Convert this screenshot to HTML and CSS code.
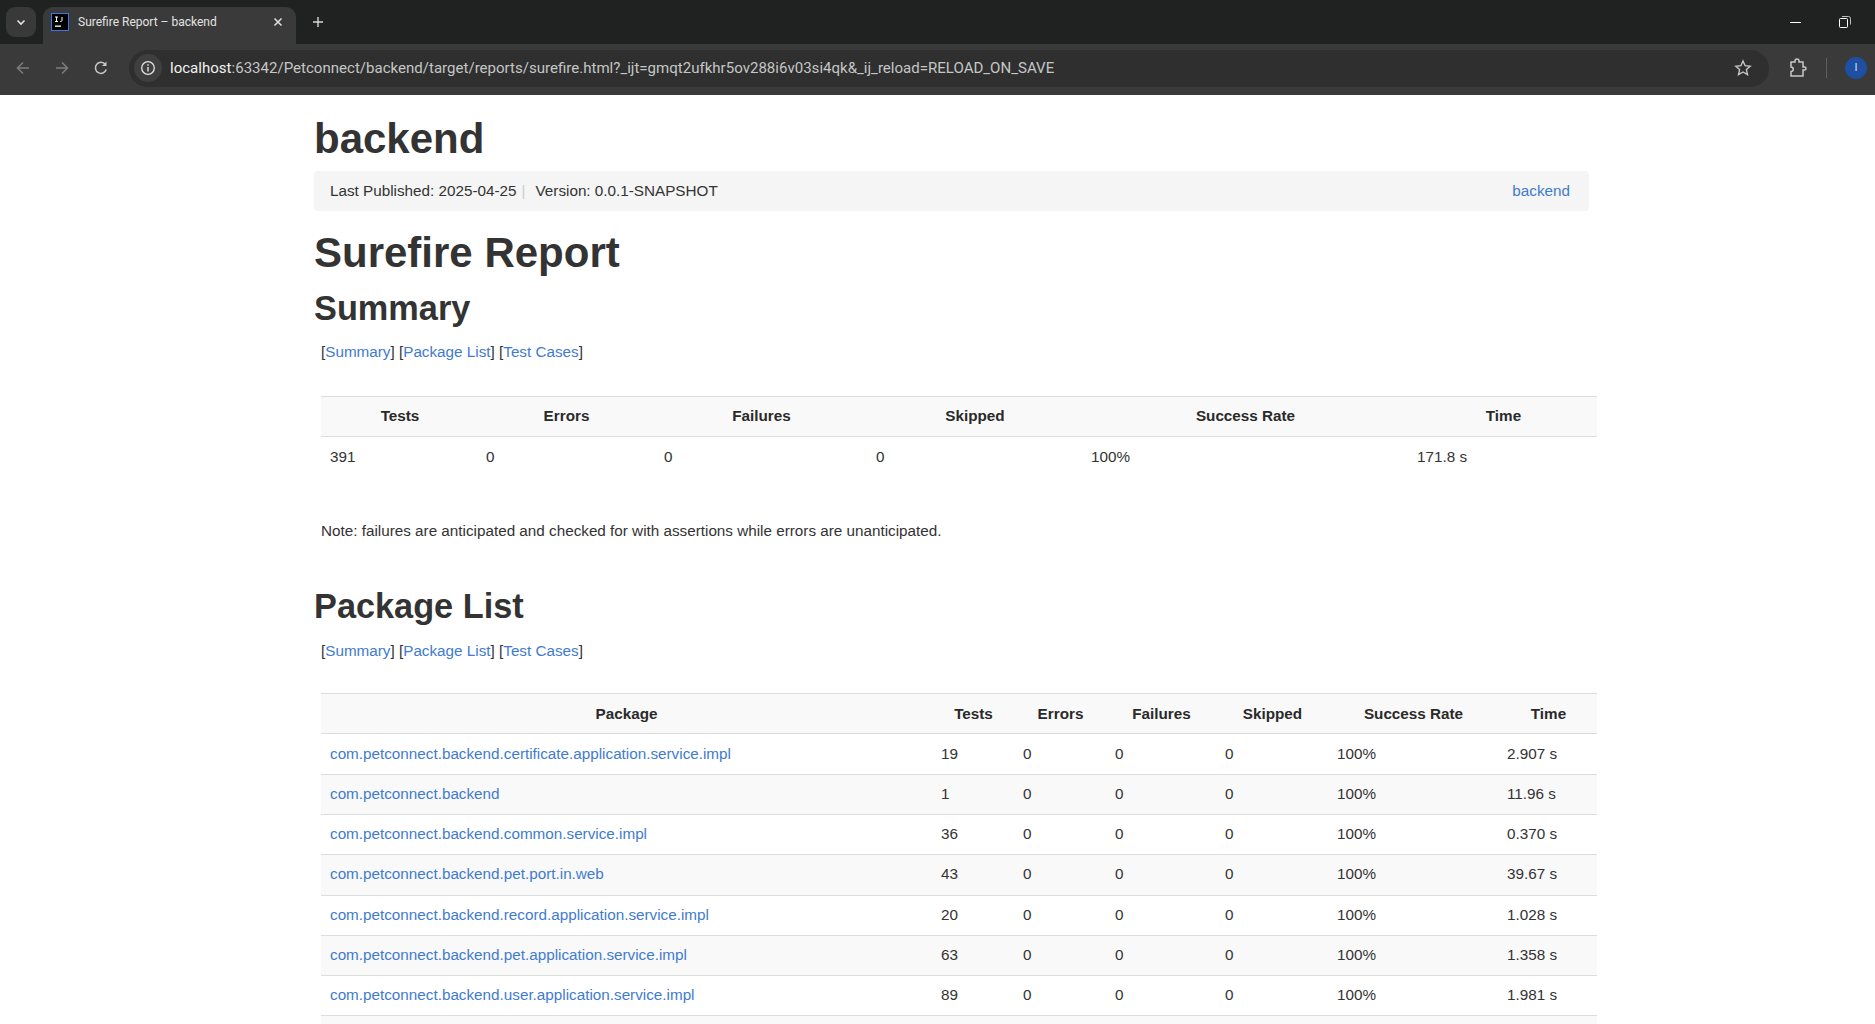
FILE: index.html
```html
<!DOCTYPE html>
<html lang="en">
<head>
    <meta charset="UTF-8">
    <title>Surefire Report – backend</title>
    <link rel="stylesheet" href="styles.css">
</head>
<body>
<div class="chrome">
    <div class="tabstrip">
        <div class="tabsearch">
            <svg width="12" height="12" viewBox="0 0 12 12"><path d="M2.500 4.500 6 8l3.500-3.500" fill="none" stroke="#e3e3e3" stroke-width="1.600"/></svg>
        </div>
        <div class="tab">
            <svg class="favicon" width="18" height="18" viewBox="0 0 18 18"><rect x="0.500" y="0.500" width="17" height="17" fill="#000" stroke="#3b78e7"/><rect x="4" y="12.500" width="6" height="1.300" fill="#fff"/><path d="M4 4h3M5.500 4v4.500M4 8.500h3M11 4v3.500q0 1-1.800 1" fill="none" stroke="#fff"/></svg>
            <span class="tabtitle">Surefire Report – backend</span>
            <svg class="tabclose" width="10" height="10" viewBox="0 0 10 10"><path d="M1.500 1.500l7 7M8.500 1.500l-7 7" stroke="#e3e3e3" stroke-width="1.500"/></svg>
        </div>
        <svg class="newtab" width="12" height="12" viewBox="0 0 12 12"><path d="M6 1v10M1 6h10" stroke="#d8d8d8" stroke-width="1.400"/></svg>
        <div class="winbtns">
            <svg width="11" height="11" viewBox="0 0 11 11"><path d="M0 5.500h11" stroke="#fff"/></svg>
            <svg width="12" height="12" viewBox="0 0 12 12"><rect x="0.500" y="2.500" width="8" height="9" rx="1" fill="none" stroke="#fff"/><path d="M3 0.500h6.500q2 0 2 2v6" fill="none" stroke="#bbb"/></svg>
        </div>
    </div>
    <div class="toolbar">
        <svg class="navicon" width="16" height="16" viewBox="0 0 16 16"><path d="M14 8H2.500M8 2.500 2.500 8 8 13.500" fill="none" stroke="#7d7d7d" stroke-width="1.500"/></svg>
        <svg class="navicon" width="16" height="16" viewBox="0 0 16 16"><path d="M2 8h11.500M8 2.500 13.500 8 8 13.500" fill="none" stroke="#7d7d7d" stroke-width="1.500"/></svg>
        <svg class="navicon" width="16" height="16" viewBox="0 0 16 16"><path d="M13.200 9.500A5.500 5.500 0 1 1 12.300 4.500" fill="none" stroke="#c7c7c7" stroke-width="1.500"/><path d="M13.500 1.500v4.500H9z" fill="#c7c7c7"/></svg>
        <div class="omnibox">
            <div class="siteinfo">
                <svg width="16" height="16" viewBox="0 0 16 16"><circle cx="8" cy="8" r="6.300" fill="none" stroke="#e3e3e3" stroke-width="1.300"/><path d="M8 7v4.500M8 4.300v1.500" stroke="#e3e3e3" stroke-width="1.400"/></svg>
            </div>
            <span class="url"><span class="host">localhost</span>:63342/Petconnect/backend/target/reports/surefire.html?_ijt=gmqt2ufkhr5ov288i6v03si4qk&amp;_ij_reload=RELOAD_ON_SAVE</span>
            <svg class="star" width="18" height="18" viewBox="0 0 18 18"><path d="M9 2l2.100 4.700 5.100.5-3.800 3.400 1.100 5L9 13l-4.500 2.600 1.100-5L1.800 7.200l5.100-.5z" fill="none" stroke="#c7c7c7" stroke-width="1.400"/></svg>
        </div>
        <svg class="ext" width="18" height="20" viewBox="0 0 18 20"><path d="M2 4h4V3a2 2 0 0 1 4 0v1h4v5h1.500a1.500 1.500 0 0 1 0 3H14v6H2v-4.500a2 2 0 0 0 0-4.500z" fill="none" stroke="#c7c7c7" stroke-width="1.500"/></svg>
        <div class="sep"></div>
        <div class="avatar">I</div>
    </div>
</div>

<div class="page">
    <h1 class="projname">backend</h1>
    <div class="breadcrumb">
        <span>Last Published: 2025-04-25<span class="divider">|</span>Version: 0.0.1-SNAPSHOT</span>
        <a href="#">backend</a>
    </div>
    <h1 class="title">Surefire Report</h1>

    <h2>Summary</h2>
    <p class="jump">[<a href="#">Summary</a>] [<a href="#">Package List</a>] [<a href="#">Test Cases</a>]</p>
    <table class="summary">
        <colgroup>
            <col class="s1"><col class="s2"><col class="s3"><col class="s4"><col class="s5"><col class="s6">
        </colgroup>
        <tr><th>Tests</th><th>Errors</th><th>Failures</th><th>Skipped</th><th>Success Rate</th><th>Time</th></tr>
        <tr><td>391</td><td>0</td><td>0</td><td>0</td><td>100%</td><td>171.8 s</td></tr>
    </table>
    <p class="note">Note: failures are anticipated and checked for with assertions while errors are unanticipated.</p>

    <h2 class="second">Package List</h2>
    <p class="jump jump-second">[<a href="#">Summary</a>] [<a href="#">Package List</a>] [<a href="#">Test Cases</a>]</p>
    <table class="packages">
        <colgroup>
            <col class="p1"><col class="p2"><col class="p3"><col class="p4"><col class="p5"><col class="p6"><col class="p7">
        </colgroup>
        <tr><th>Package</th><th>Tests</th><th>Errors</th><th>Failures</th><th>Skipped</th><th>Success Rate</th><th>Time</th></tr>
        <tr><td><a href="#">com.petconnect.backend.certificate.application.service.impl</a></td><td>19</td><td>0</td><td>0</td><td>0</td><td>100%</td><td>2.907 s</td></tr>
        <tr><td><a href="#">com.petconnect.backend</a></td><td>1</td><td>0</td><td>0</td><td>0</td><td>100%</td><td>11.96 s</td></tr>
        <tr><td><a href="#">com.petconnect.backend.common.service.impl</a></td><td>36</td><td>0</td><td>0</td><td>0</td><td>100%</td><td>0.370 s</td></tr>
        <tr><td><a href="#">com.petconnect.backend.pet.port.in.web</a></td><td>43</td><td>0</td><td>0</td><td>0</td><td>100%</td><td>39.67 s</td></tr>
        <tr><td><a href="#">com.petconnect.backend.record.application.service.impl</a></td><td>20</td><td>0</td><td>0</td><td>0</td><td>100%</td><td>1.028 s</td></tr>
        <tr><td><a href="#">com.petconnect.backend.pet.application.service.impl</a></td><td>63</td><td>0</td><td>0</td><td>0</td><td>100%</td><td>1.358 s</td></tr>
        <tr><td><a href="#">com.petconnect.backend.user.application.service.impl</a></td><td>89</td><td>0</td><td>0</td><td>0</td><td>100%</td><td>1.981 s</td></tr>
        <tr><td>&nbsp;</td><td></td><td></td><td></td><td></td><td></td><td></td></tr>
    </table>
</div>
</body>
</html>
```

FILE: styles.css
```css
*{
    box-sizing: border-box;
}
html,body{
    margin: 0;
    height: 100%;
    overflow: hidden;
}
body{
    background: #fff;
    font-family: "Liberation Sans", Arial, sans-serif;
    font-size: 15.25px;
    color: #333;
}
a{
    color: #3f7bd0;
    text-decoration: none;
}

/* browser frame */
.chrome{
    height: 95px;
    background: #202221;
    font-family: "Roboto", "Liberation Sans", sans-serif;
}
.tabstrip{
    height: 44px;
    display: flex;
    align-items: center;
    padding-left: 6px;
    color: #e3e3e3;
}
.tabsearch{
    width: 30px;
    height: 30px;
    border-radius: 9px;
    background: #393939;
    display: flex;
    align-items: center;
    justify-content: center;
}
.tab{
    width: 253px;
    height: 37px;
    margin: 7px 0 0 7px;
    padding: 0 13px 7px 8px;
    background: #3a3a3a;
    border-radius: 10px 10px 0 0;
    display: flex;
    align-items: center;
    font-size: 12px;
}
.favicon{
    flex: none;
}
.tabtitle{
    margin-left: 9px;
    flex: 1;
}
.newtab{
    margin-left: 16px;
}
.winbtns{
    margin-left: auto;
    padding-right: 24px;
    display: flex;
    gap: 38px;
    align-items: center;
}
.toolbar{
    height: 51px;
    background: #3a3a3a;
    display: flex;
    align-items: center;
    padding: 0 8px 3px 15px;
}
.navicon{
    margin-right: 23px;
    flex: none;
}
.omnibox{
    flex: none;
    width: 1640px;
    height: 37px;
    margin-left: -3px;
    background: #2f2f2f;
    border-radius: 19px;
    display: flex;
    align-items: center;
    padding: 0 17px 0 5px;
    font-size: 15.050px;
    color: #c4c7c5;
}
.siteinfo{
    width: 28px;
    height: 28px;
    background: #3f3f3f;
    border-radius: 50%;
    display: flex;
    align-items: center;
    justify-content: center;
}
.url{
    margin-left: 8px;
    flex: 1;
}
.host{
    color: #f1f1f1;
}
.ext{
    flex: none;
    margin-left: 20px;
}
.sep{
    flex: none;
    width: 1px;
    height: 20px;
    background: #5f5f5f;
    margin-left: 19px;
}
.avatar{
    flex: none;
    width: 22px;
    height: 22px;
    margin-left: 18px;
    border-radius: 50%;
    background: #1f4fa3;
    color: #cfe0ff;
    font-size: 11px;
    text-align: center;
    line-height: 22px;
}

/* report */
.page{
    width: 1275px;
    margin-left: 314px;
}
h1,h2{
    margin: 0;
    color: #333;
    font-weight: bold;
}
.projname{
    font-size: 42px;
    line-height: 46px;
    padding-top: 21px;
}
.breadcrumb{
    height: 40px;
    margin-top: 9px;
    padding: 0 19px 2px 16px;
    background: #f5f5f5;
    border-radius: 4px;
    display: flex;
    align-items: center;
    justify-content: space-between;
}
.divider{
    color: #ccc;
    margin: 0 10px 0 5px;
}
.title{
    font-size: 42px;
    line-height: 50px;
    margin-top: 17px;
}
h2{
    font-size: 34.300px;
    line-height: 44px;
    margin-top: 8px;
}
h2.second{
    margin-top: 43px;
}
.jump{
    margin: 12px 0 0 7px;
    line-height: 20px;
}
.jump-second{
    margin-top: 13px;
}
table{
    width: 1276px;
    margin: 34px 0 0 7px;
    border-collapse: collapse;
    table-layout: fixed;
    border-top: 1px solid #ddd;
}
.packages{
    margin-top: 32px;
}
th,td{
    height: 40.300px;
    padding: 0 10px 2px 10px;
    border-bottom: 1px solid #ddd;
    text-align: left;
}
td:first-child{
    padding-left: 9px;
}
th{
    padding: 0 8px 2px 11px;
    text-align: center;
    color: #2a2a2a;
}
.packages th{
    padding-bottom: 0;
}
.packages th:first-child{
    padding-left: 9px;
}
.packages tr:nth-child(odd) th,
.packages tr:nth-child(odd) td,
.summary th{
    background: #f9f9f9;
}
.summary td{
    border-bottom: 0;
}
.s1{width:155px}.s2{width:178px}.s3{width:212px}.s4{width:215px}.s5{width:326px}.s6{width:190px}
.p1{width:610px}.p2{width:82px}.p3{width:92px}.p4{width:110px}.p5{width:112px}.p6{width:170px}.p7{width:100px}
.note{
    margin: 44px 0 0 7px;
    line-height: 20px;
}
```
